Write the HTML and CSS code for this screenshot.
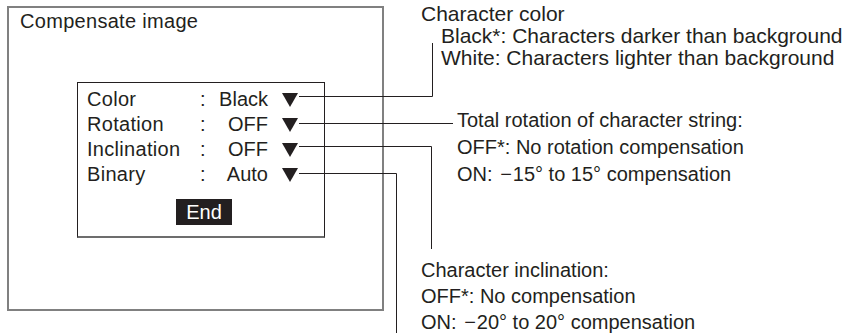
FILE: index.html
```html
<!DOCTYPE html>
<html lang="en">
<head>
  <meta charset="UTF-8">
  <meta name="viewport" content="width=device-width, initial-scale=1.0">
  <title>Compensate image</title>
  <link rel="stylesheet" href="styles.css">
</head>
<body>
  <div class="stage">
    <div class="screen">
      <div class="title">Compensate image</div>
      <div class="menu">
        <div class="row">
          <span class="label">Color</span><span class="colon">:</span><span class="value">Black</span>
          <svg class="arrow" width="16" height="14" viewBox="0 0 16 14"><polygon points="0,0 16,0 8,14"/></svg>
        </div>
        <div class="row">
          <span class="label">Rotation</span><span class="colon">:</span><span class="value">OFF</span>
          <svg class="arrow" width="16" height="14" viewBox="0 0 16 14"><polygon points="0,0 16,0 8,14"/></svg>
        </div>
        <div class="row">
          <span class="label">Inclination</span><span class="colon">:</span><span class="value">OFF</span>
          <svg class="arrow" width="16" height="14" viewBox="0 0 16 14"><polygon points="0,0 16,0 8,14"/></svg>
        </div>
        <div class="row">
          <span class="label">Binary</span><span class="colon">:</span><span class="value">Auto</span>
          <svg class="arrow" width="16" height="14" viewBox="0 0 16 14"><polygon points="0,0 16,0 8,14"/></svg>
        </div>
        <div class="end">End</div>
      </div>
    </div>

    <div class="notes">
      <div class="note note-color">
        <div>Character color</div>
        <div class="sub">Black*: Characters darker than background</div>
        <div class="sub">White: Characters lighter than background</div>
      </div>
      <div class="note note-rotation">
        <div>Total rotation of character string:</div>
        <div>OFF*: No rotation compensation</div>
        <div>ON: <span class="minus">&minus;</span>15&deg; to 15&deg; compensation</div>
      </div>
      <div class="note note-incline">
        <div>Character inclination:</div>
        <div>OFF*: No compensation</div>
        <div>ON: <span class="minus">&minus;</span>20&deg; to 20&deg; compensation</div>
      </div>
    </div>

    <!-- leader lines from each setting to its note -->
    <svg class="leaders" width="849" height="333" viewBox="0 0 849 333">
      <path d="M299 96.5 H432.5 V43"/>
      <path d="M299 123.5 H453"/>
      <path d="M299 146.5 H431.5 V249"/>
      <path d="M299 173.5 H396.5 V333"/>
    </svg>
  </div>
</body>
</html>
```

FILE: styles.css
```css
body {
  margin: 0;
  background: #fff;
  color: #231f20;
  font-family: "Liberation Sans", Arial, sans-serif;
  font-size: 20px;
}
.stage {
  position: relative;
  width: 849px;
  height: 333px;
  display: flex;
  overflow: hidden;
}
.screen {
  box-sizing: border-box;
  width: 377px;
  height: 305px;
  margin: 6px 0 0 7px;
  padding: 2px 0 0 11px;
  border: 2px solid #808080;
}
.title {
  line-height: 23px;
  letter-spacing: 0.3px;
}
.menu {
  box-sizing: border-box;
  width: 248px;
  height: 156px;
  margin: 49px 0 0 57px;
  padding: 4px 0 0 9px;
  border: 1px solid #231f20;
  border-bottom: 2px solid #6d6d6d;
}
.row {
  display: flex;
  align-items: flex-start;
  line-height: 25px;
}
.label {
  width: 113px;
  letter-spacing: 0.3px;
}
.colon {
  width: 6px;
}
.value {
  width: 62px;
  text-align: right;
}
.arrow {
  margin: 6px 0 0 14px;
  fill: #231f20;
}
.end {
  width: 56px;
  height: 26px;
  margin: 12px 0 0 89px;
  background: #231f20;
  color: #fff;
  line-height: 26px;
  text-align: center;
}
.notes {
  margin-left: 37px;
}
.note {
  white-space: nowrap;
}
.note-color {
  margin-top: 3px;
  font-size: 21px;
  line-height: 22px;
}
.note-color .sub {
  padding-left: 20px;
}
.note-rotation {
  margin: 38px 0 0 36px;
  line-height: 27px;
}
.note-incline {
  margin-top: 69px;
  line-height: 26px;
}
.minus {
  margin: 0 1px 0 2px;
}
.leaders {
  position: absolute;
  left: 0;
  top: 0;
  fill: none;
  stroke: #231f20;
  stroke-width: 1;
}
```
